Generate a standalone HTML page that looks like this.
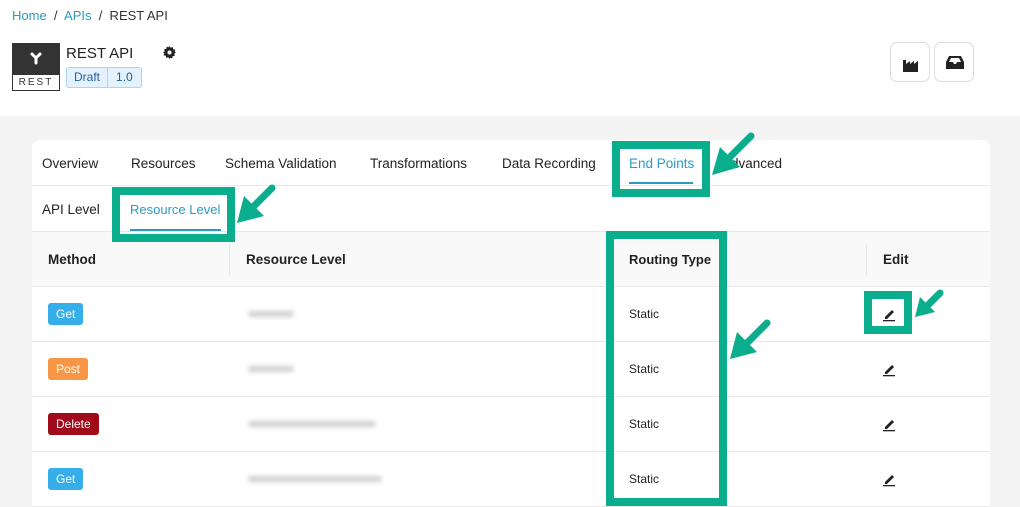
<!DOCTYPE html>
<html><head><style>
*{margin:0;padding:0;box-sizing:border-box}
body{width:1020px;height:507px;overflow:hidden;background:#fff;font-family:"Liberation Sans",sans-serif;position:relative;color:#222}
.a{position:absolute}
.bc{left:12px;top:8px;font-size:13px;color:#333}
.bc span.l{color:#2a9ac4}
.gray{left:0;top:116px;width:1020px;height:391px;background:#f4f4f4}
.card{left:32px;top:140px;width:958px;height:367px;background:#fff;border-radius:8px 8px 0 0}
.t{font-size:13.5px;color:#222;top:156px}
.st{font-size:13.5px;top:202px}
.hl{height:1px;background:#e8e8e8;left:32px;width:958px}
.hdr{left:32px;top:232px;width:958px;height:55px;background:#f9f9f9}
.th{font-size:13.5px;font-weight:bold;top:252px;color:#222}
.vs{width:1px;height:32px;background:#e6e6e6;top:244px}
.badge{font-size:12px;color:#fff;border-radius:3px;padding:4px 8px;left:48px}
.st2{font-size:12px;left:629px;color:#222}
.blur{height:6px;background:#d0d0d0;filter:blur(2.5px);left:248px;border-radius:3px}
.btn{width:40px;height:40px;border:1px solid #ddd;border-radius:7px;top:42px;background:#fff}
</style></head><body>
<div class="a bc"><span class="l">Home</span> &nbsp;/&nbsp; <span class="l">APIs</span> &nbsp;/&nbsp; REST API</div>
<div class="a" style="left:12px;top:43px;width:48px;height:48px;background:#333;border:1px solid #333">
<svg width="46" height="30" viewBox="0 0 46 30"><g stroke="#fff" stroke-width="3" stroke-linecap="round"><line x1="19" y1="10" x2="23" y2="14"/><line x1="27" y1="10" x2="23" y2="14"/><line x1="23" y1="14" x2="23" y2="19"/></g></svg>
<div style="position:absolute;left:0;top:31px;width:46px;height:15px;background:#fff;font-size:10px;letter-spacing:2px;text-align:center;line-height:15px;color:#333">REST</div></div>
<div class="a" style="left:66px;top:45px;font-size:15px">REST API</div>
<svg class="a" style="left:163px;top:46px" width="13" height="13" viewBox="0 0 16 16"><path fill="#222" d="M8 0l1.5 2.2 2.6-.8.4 2.7 2.7.4-.8 2.6L16 8l-2.2 1.5.8 2.6-2.7.4-.4 2.7-2.6-.8L8 16l-1.5-2.2-2.6.8-.4-2.7-2.7-.4.8-2.6L0 8l2.2-1.5-.8-2.6 2.7-.4.4-2.7 2.6.8z"/><circle cx="8" cy="8" r="2.5" fill="#fff"/></svg>
<div class="a" style="left:66px;top:67px;height:21px;border:1px solid #a8d4f5;background:#e3f2fd;border-radius:3px;font-size:12px;color:#1f5fa8;display:flex;line-height:19px"><span style="padding:0 7px;border-right:1px solid #a8d4f5">Draft</span><span style="padding:0 8px">1.0</span></div>
<div class="a btn" style="left:890px"><svg class="a" style="left:12px;top:15px" width="16" height="14"><path d="M0 14V2h3v4l4-3v3l4-3v3l4-3v11z" fill="#222"/></svg></div>
<div class="a btn" style="left:934px"><svg class="a" style="left:11px;top:13px" width="18" height="13"><path d="M3 0h12l3 6v7H0V6zM3 6h4l1 2h2l1-2h4L13 2H5z" fill="#222" fill-rule="evenodd"/></svg></div>
<div class="a gray"></div>
<div class="a card"></div>
<div class="a t" style="left:42px">Overview</div>
<div class="a t" style="left:131px">Resources</div>
<div class="a t" style="left:225px">Schema Validation</div>
<div class="a t" style="left:370px">Transformations</div>
<div class="a t" style="left:502px">Data Recording</div>
<div class="a t" style="left:629px;color:#2a9ac4">End Points</div>
<div class="a" style="left:629px;top:182px;width:64px;height:2px;background:#2a9ac4"></div>
<div class="a t" style="left:722px">Advanced</div>
<div class="a hl" style="top:185px"></div>
<div class="a st" style="left:42px">API Level</div>
<div class="a st" style="left:130px;color:#2a9ac4;font-size:13px">Resource Level</div>
<div class="a" style="left:130px;top:229px;width:91px;height:2px;background:#2a9ac4"></div>
<div class="a hdr"></div>
<div class="a hl" style="top:231px"></div>
<div class="a th" style="left:48px">Method</div>
<div class="a vs" style="left:229px"></div>
<div class="a th" style="left:246px">Resource Level</div>
<div class="a vs" style="left:612px"></div>
<div class="a th" style="left:629px;font-size:13px">Routing Type</div>
<div class="a vs" style="left:866px"></div>
<div class="a th" style="left:883px">Edit</div>
<div class="a hl" style="top:286px"></div>
<div class="a hl" style="top:341px"></div>
<div class="a hl" style="top:396px"></div>
<div class="a hl" style="top:451px"></div>
<div class="a hl" style="top:506px"></div>
<div class="a badge" style="top:303px;background:#36aeea">Get</div>
<div class="a badge" style="top:358px;background:#f79646">Post</div>
<div class="a badge" style="top:413px;background:#a00a1a">Delete</div>
<div class="a badge" style="top:468px;background:#36aeea">Get</div>
<div class="a blur" style="top:311px;width:46px"></div>
<div class="a blur" style="top:366px;width:46px"></div>
<div class="a blur" style="top:421px;width:128px"></div>
<div class="a blur" style="top:476px;width:134px"></div>
<div class="a st2" style="top:307px">Static</div>
<div class="a st2" style="top:362px">Static</div>
<div class="a st2" style="top:417px">Static</div>
<div class="a st2" style="top:472px">Static</div>
<svg class="a" style="left:0;top:0" width="1020" height="507">
<g fill="#222"><path d="M885 317l7-7 2 2-7 7h-2z"/><rect x="883" y="320" width="12" height="1.3"/>
<path d="M885 372l7-7 2 2-7 7h-2z"/><rect x="883" y="375" width="12" height="1.3"/>
<path d="M885 427l7-7 2 2-7 7h-2z"/><rect x="883" y="430" width="12" height="1.3"/>
<path d="M885 482l7-7 2 2-7 7h-2z"/><rect x="883" y="485" width="12" height="1.3"/></g>
<g fill="none" stroke="#0aae8c" stroke-width="8">
<rect x="616" y="145" width="90" height="48"/>
<rect x="116" y="191" width="115" height="47"/>
<rect x="610" y="235" width="113" height="267"/>
<rect x="868" y="295" width="40" height="35"/>
</g>
<g stroke="#0aae8c" stroke-width="7" stroke-linecap="round">
<line x1="751" y1="136" x2="728" y2="159"/><line x1="272" y1="188" x2="252" y2="208"/>
<line x1="767" y1="323" x2="746" y2="344"/><line x1="940" y1="293" x2="928" y2="305"/></g>
<g fill="#0aae8c">
<path d="M712 175l8-28 20 20z"/><path d="M237 223l7-27 20 20z"/>
<path d="M730 359l7-27 20 20z"/><path d="M915 317l5-20 15 15z"/></g>
</svg>
</body></html>
